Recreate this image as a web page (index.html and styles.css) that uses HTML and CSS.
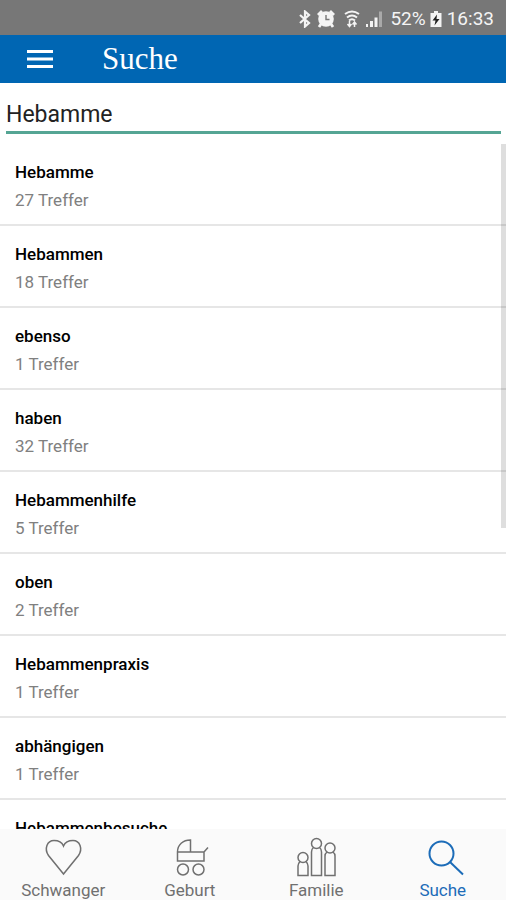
FILE: index.html
```html
<!DOCTYPE html>
<html lang="de">
<head>
<meta charset="utf-8">
<meta name="viewport" content="width=device-width, initial-scale=1">
<title>Suche</title>
<link rel="stylesheet" href="styles.css">
</head>
<body>
<div class="app">
  <div class="status">
    <svg class="s-bt" width="12" height="18" viewBox="0 0 12 18" fill="none" stroke="currentColor" stroke-width="2.2" aria-hidden="true"><path d="M1 5l9 8-4 3.500V1.500l4 3.500-9 8"/></svg>
    <svg class="s-alarm" width="18" height="18" viewBox="0 0 18 18" aria-hidden="true"><circle cx="9" cy="9" r="7.800" fill="currentColor"/><path d="M1 5l4-4M17 5l-4-4M4 14l-2 3M14 14l2 3" stroke="currentColor" stroke-width="2.800"/><path d="M9 5v4.500h3.500" fill="none" stroke="#777" stroke-width="1.400"/></svg>
    <svg class="s-wifi" width="16" height="18" viewBox="0 0 16 18" fill="none" stroke="currentColor" aria-hidden="true"><path d="M1 4q7-5 14 0M3 7.500q5-4 10 0M5 10.500q3-2.500 6 0" stroke-width="2"/><path d="M5.500 11v5M3.500 14l2 2.500 2-2.500M10.500 17v-5M8.500 14.500l2-2.500 2 2.500" stroke-width="1.500"/></svg>
    <svg class="s-signal" width="18" height="18" viewBox="0 0 18 18" fill="currentColor" aria-hidden="true"><path d="M1 14h2v3H1zM5 11h3v6H5zM9.500 7.500h3V17h-3z"/><path d="M14 1.500h3V17h-3z" opacity=".4"/></svg>
    <span class="s-percent">52%</span>
    <svg class="s-batt" width="12" height="18" viewBox="0 0 12 18" aria-hidden="true"><path d="M4 1h4v2h3.500v14H.5V3H4z" fill="currentColor"/><path d="M7 4.500L2.500 10.500H5.500L4.500 15.500L9.500 9H6.500z" fill="#222"/></svg>
    <span>16:33</span>
  </div>
  <header class="bar">
    <button class="menu" type="button" aria-label="Menü">
      <svg width="28" height="20" viewBox="0 0 28 20" aria-hidden="true"><path d="M1 2.500h26M1 10h26M1 17.500h26" stroke="currentColor" stroke-width="3"/></svg>
    </button>
    <h1>Suche</h1>
  </header>
  <main class="content">
    <div class="search"><input type="text" value="Hebamme" aria-label="Suchbegriff"></div>
    <div class="results">
      <ul>
        <li><a href="#"><b>Hebamme</b><span>27 Treffer</span></a></li>
        <li><a href="#"><b>Hebammen</b><span>18 Treffer</span></a></li>
        <li><a href="#"><b>ebenso</b><span>1 Treffer</span></a></li>
        <li><a href="#"><b>haben</b><span>32 Treffer</span></a></li>
        <li><a href="#"><b>Hebammenhilfe</b><span>5 Treffer</span></a></li>
        <li><a href="#"><b>oben</b><span>2 Treffer</span></a></li>
        <li><a href="#"><b>Hebammenpraxis</b><span>1 Treffer</span></a></li>
        <li><a href="#"><b>abhängigen</b><span>1 Treffer</span></a></li>
        <li><a href="#"><b>Hebammenbesuche</b></a></li>
      </ul>
      <div class="thumb"></div>
    </div>
  </main>
  <nav class="tabs">
    <a href="#">
      <svg width="42" height="42" viewBox="0 0 42 42" aria-hidden="true"><path d="M21.500 38L6.500 19.500C2 13 5 4.500 12 4.500c4.500 0 8 2 9.500 5.500C23 6.500 26.500 4.500 31 4.500c7 0 10 8.500 5.500 15z"/></svg>
      <span>Schwanger</span>
    </a>
    <a href="#">
      <svg width="42" height="42" viewBox="0 0 42 42" aria-hidden="true"><path d="M8.500 16C8.500 8.500 14 4 21.500 4V16M8.500 16H35v9H8.500zM35 16l4-4.500"/><circle cx="14" cy="33.500" r="5.500"/><circle cx="29.500" cy="33.500" r="5.500"/></svg>
      <span>Geburt</span>
    </a>
    <a href="#">
      <svg width="42" height="42" viewBox="0 0 42 42" aria-hidden="true"><circle cx="8" cy="21.500" r="5"/><circle cx="21.500" cy="7.500" r="5"/><circle cx="35" cy="12" r="5"/><path d="M5 25.500Q3 27.500 3 30V39.500h10V30Q13 27.500 11 25.500M18.500 11.500Q16.500 13 16.500 16V39.500h10V16Q26.500 13 24.500 11.500M32 16Q30 17.500 30 20V39.500h10V20Q40 17.500 38 16"/></svg>
      <span>Familie</span>
    </a>
    <a href="#" class="active" aria-current="page">
      <svg width="42" height="42" viewBox="0 0 42 42" aria-hidden="true"><circle cx="19.500" cy="17.500" r="12"/><path d="M28 26L41 38.500"/></svg>
      <span>Suche</span>
    </a>
  </nav>
</div>
</body>
</html>
```
FILE: styles.css
```css
* { box-sizing: border-box; }

body {
  margin: 0;
  background: #fff;
  color: #000;
  font-family: Roboto, "Liberation Sans", sans-serif;
}

.app {
  display: flex;
  flex-direction: column;
  height: 100vh;
}

a { color: inherit; text-decoration: none; }

.status {
  display: flex;
  align-items: center;
  justify-content: flex-end;
  height: 35px;
  padding: 2px 12px 0 0;
  background: #777;
  color: #f4f4f4;
  font-size: 19px;
}

.s-alarm { margin-left: 6px; }
.s-wifi { margin-left: 9px; }
.s-signal { margin: 0 7px 0 5px; }
.s-batt { margin: 0 5px 0 4px; }

.bar {
  display: flex;
  align-items: center;
  height: 48px;
  padding-left: 26px;
  background: #0066b3;
  color: #fff;
}

.menu {
  display: flex;
  width: 76px;
  padding: 0;
  border: 0;
  background: none;
  color: inherit;
}

.bar h1 {
  margin: 0;
  font: 400 31px/48px "Liberation Serif", serif;
}

.content {
  display: flex;
  flex: 1;
  flex-direction: column;
  min-height: 0;
}

.search { padding: 12px 5px 10px 6px; }

.search input {
  display: block;
  width: 100%;
  height: 39px;
  padding: 3px 0 0;
  border: 0;
  border-bottom: 3px solid #55a594;
  outline: 0;
  background: none;
  color: #222;
  font: 400 23px/32px Roboto, "Liberation Sans", sans-serif;
}

.results {
  position: relative;
  flex: 1;
  min-height: 0;
  overflow: hidden;
}

.results ul {
  margin: 0;
  padding: 0;
  list-style: none;
}

.results li { border-bottom: 2px solid #e6e6e6; }

.results a {
  display: block;
  padding: 14px 15px 10px;
}

.results b,
.results a span {
  display: block;
  font-size: 17px;
  line-height: 28px;
}

.results b { font-weight: 500; }
.results a span { color: #808080; }

.thumb {
  position: absolute;
  top: 0;
  right: 0;
  width: 5px;
  height: 56%;
  background: rgba(0, 0, 0, 0.13);
}

.tabs {
  display: flex;
  height: 71px;
  background: #fafafa;
  color: #707070;
}

.tabs a {
  display: flex;
  flex: 1;
  flex-direction: column;
  align-items: center;
  padding-top: 7px;
  font-size: 17px;
  line-height: 24px;
}

.tabs svg {
  flex: none;
  fill: none;
  stroke: currentColor;
  stroke-width: 1.5px;
}

.tabs .active { color: #1c6cb8; }
.tabs .active svg { stroke-width: 2px; }
```
